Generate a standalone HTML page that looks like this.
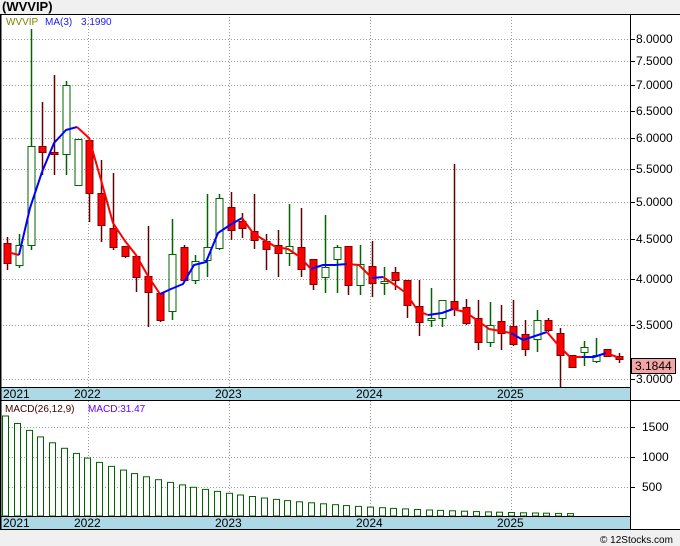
<!DOCTYPE html>
<html><head><meta charset="utf-8"><style>
body{margin:0;background:#f0f0f0;width:680px;height:546px;overflow:hidden;font-family:"Liberation Sans",sans-serif}
svg{position:absolute;left:0;top:0}
</style></head><body>
<svg id="s" width="680" height="546" xmlns="http://www.w3.org/2000/svg" font-family="Liberation Sans, sans-serif">
<rect x="0" y="0" width="680" height="546" fill="#f0f0f0"/>
<text x="2" y="11" font-size="13" font-weight="bold" fill="#000">(WVVIP)</text>
<rect x="0" y="14" width="680" height="516" fill="#fff"/>
<rect x="0" y="387" width="630" height="14" fill="#add8e6"/>
<rect x="0" y="516" width="630" height="14" fill="#add8e6"/>
<g id="grid" stroke="#999" stroke-dasharray="1,2" stroke-width="1"></g>
<g id="c"></g>
<g stroke="#000" fill="none">
<line x1="0.5" y1="14" x2="0.5" y2="530" stroke-width="2"/>
<line x1="0" y1="14.5" x2="680" y2="14.5"/>
<line x1="630.5" y1="14" x2="630.5" y2="530"/>
<line x1="0" y1="387.5" x2="630" y2="387.5"/>
<line x1="0" y1="400.5" x2="680" y2="400.5"/>
<line x1="0" y1="516.5" x2="630" y2="516.5"/>
<line x1="0" y1="529.5" x2="680" y2="529.5"/>
</g>
<g font-size="12" fill="#000">
<text x="3" y="398">2021</text><text x="74" y="398">2022</text><text x="215" y="398">2023</text><text x="356" y="398">2024</text><text x="497" y="398">2025</text>
<text x="3" y="527">2021</text><text x="74" y="527">2022</text><text x="215" y="527">2023</text><text x="356" y="527">2024</text><text x="497" y="527">2025</text>
</g>
<g font-size="12" fill="#000" id="lbl"></g>
<rect x="631.5" y="358.5" width="44" height="15" fill="#f4a6a6" stroke="#000"/>
<text x="635" y="370" font-size="12" fill="#000">3.1844</text>
<text x="6" y="25" font-size="10" fill="#808000">WVVIP</text>
<text x="45" y="25" font-size="10" fill="#1a1aff">MA(3)</text>
<text x="81" y="25" font-size="10" fill="#1a1aff">3.1990</text>
<text x="5" y="412" font-size="10" fill="#400000">MACD(26,12,9)</text>
<text x="88" y="412" font-size="10" fill="#6600ff">MACD:31.47</text>
<text x="600" y="543" font-size="10" fill="#000">© 12Stocks.com</text>
</svg>
<script>
var NS="http://www.w3.org/2000/svg",g=document.getElementById('c'),gr=document.getElementById('grid'),lb=document.getElementById('lbl');
function el(p,t,a){var e=document.createElementNS(NS,t);for(var k in a)e.setAttribute(k,a[k]);p.appendChild(e);return e;}
var py=[["8.0000",39],["7.5000",61],["7.0000",85],["6.5000",111],["6.0000",138],["5.5000",169],["5.0000",202],["4.5000",239],["4.0000",279],["3.5000",325],["3.0000",379]];
py.forEach(function(p){el(gr,'line',{x1:0,x2:630,y1:p[1]+.5,y2:p[1]+.5});el(lb,'line',{x1:630,x2:635,y1:p[1]+.5,y2:p[1]+.5,stroke:'#000'});var t=el(lb,'text',{x:636,y:p[1]+4});t.textContent=p[0];});
[[1500,427],[1000,457],[500,487]].forEach(function(p){el(gr,'line',{x1:0,x2:630,y1:p[1]+.5,y2:p[1]+.5});el(lb,'line',{x1:630,x2:635,y1:p[1]+.5,y2:p[1]+.5,stroke:'#000'});var t=el(lb,'text',{x:642,y:p[1]+4});t.textContent=p[0];});
[88,229,370,511].forEach(function(x){el(gr,'line',{x1:x+.5,x2:x+.5,y1:14,y2:387});el(gr,'line',{x1:x+.5,x2:x+.5,y1:401,y2:516});});
// [color, bodyTop, bodyBot, wickTop, wickBot]
var C=[["r",243,263,237,270],["g",245,265,234,268],["g",146,245,29,250],["r",146,152,102,175],["r",152,154,75,175],["g",85,154,81,175],["g",139,185,139,186],["r",140,193,140,222],["r",193,225,160,242],["r",228,247,173,250],["r",246,256,246,258],["r",256,277,256,292],["r",276,292,226,327],["r",293,320,293,322],["g",254,311,219,320],["r",247,280,245,282],["g",261,280,255,284],["g",247,260,194,277],["g",198,248,194,250],["r",207,230,192,240],["r",221,228,213,238],
["r",231,240,194,249],["r",241,249,234,270],["r",245,253,230,277],["g",246,253,204,266],["r",247,269,208,277],["r",259,284,259,290],["g",267,277,215,293],["g",247,259,245,293],["r",246,285,246,295],["g",264,285,245,295],["r",266,283,241,297],["g",281,283,267,295],["r",272,280,267,290],["r",280,305,280,318],["r",306,322,280,336],["g",318,320,288,327],["g",300,318,300,327],["r",301,308,164,316],["r",307,323,299,325],["r",318,342,300,350],["g",325,342,302,347],["r",321,333,305,350],
["r",326,344,300,346],["r",334,349,320,356],["g",320,339,310,352],["r",320,330,318,332],["r",333,355,328,387],["r",355,367,355,368],["g",347,352,341,366],["g",355,361,338,363],["r",349,356,349,357],["r",356,359,353,363]];
C.forEach(function(c,i){var x=Math.round(7+11.77*i);var red=c[0]=="r";var wc=red?"#600000":"#006400";
el(g,'line',{x1:x+.5,x2:x+.5,y1:c[3],y2:c[4],stroke:wc,'stroke-width':1.5});
el(g,'rect',{x:x-3,y:c[1]+.5,width:7,height:Math.max(1,c[2]-c[1]),fill:red?"#f00":"#fff",stroke:red?"#800000":"#006400"});});
var segs=[["r",[[7,252],[19,255]]],["b",[[19,255],[30,208],[42,172],[54,143],[66,130],[77,127]]],["r",[[77,127],[89,138],[101,180],[113,223],[125,241],[136,255],[148,276],[160,294]]],["b",[[160,294],[171,289],[183,284],[194,265],[206,262],[218,233],[230,225],[242,218]]],["r",[[242,218],[253,233],[264,240],[276,247],[288,249],[300,257],[311,269]]],["b",[[311,269],[323,265],[335,265],[347,264]]],["r",[[347,264],[359,265],[372,278]]],["b",[[372,278],[383,277]]],["r",[[383,277],[395,285],[406,293],[418,311],[428,315]]],["b",[[428,315],[442,313],[453,309]]],["r",[[453,309],[465,312],[477,320],[489,329],[500,331],[511,333]]],["b",[[511,333],[523,340],[535,336],[547,332]]],["r",[[547,332],[558,345],[570,357],[582,357]]],["b",[[582,357],[594,357],[606,353]]],["r",[[606,353],[617,357]]]];
segs.forEach(function(s){el(g,'polyline',{points:s[1].map(function(p){return p.join(',')}).join(' '),fill:'none',stroke:s[0]=="r"?"#f00":"#00f",'stroke-width':2,'stroke-linejoin':'round'});});
for(var i=0;i<49;i++){var d=100*Math.pow(0.925,i);var x=Math.round(2+11.77*i);var t=516-d;el(g,'rect',{x:x+.5,y:t.toFixed(1),width:6,height:(516-t).toFixed(1),fill:'#fff',stroke:'#006400'});}
</script>
</body></html>
